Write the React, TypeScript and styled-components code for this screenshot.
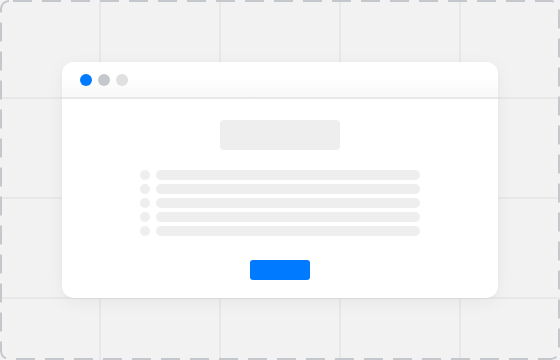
import React from "react";
import styled, { createGlobalStyle } from "styled-components";

const Global = createGlobalStyle`
  html, body { margin: 0; padding: 0; background: #f2f2f2; }
  body { font-family: "Liberation Sans", Arial, sans-serif; }
`;

const Frame = styled.div`
  position: relative;
  width: 560px;
  height: 360px;
  box-sizing: border-box;
  border-radius: 8px;
  overflow: hidden;
  background-color: #f2f2f2;
  background-image:
    linear-gradient(to right, #e8e8e8 0, #e8e8e8 2px, transparent 2px),
    linear-gradient(to bottom, #e8e8e8 0, #e8e8e8 2px, transparent 2px);
  background-size: 120px 100px, 120px 100px;
  background-position: 99px 0, 0 97px;
  display: flex;
  align-items: center;
  justify-content: center;
`;

const DashedEdge = styled.svg`
  position: absolute;
  inset: 0;
  pointer-events: none;
`;

const Window = styled.div`
  width: 436px;
  height: 236px;
  background: #ffffff;
  border-radius: 12px;
  box-shadow: 0 4px 18px rgba(0, 0, 0, 0.05), 0 1px 3px rgba(0, 0, 0, 0.03);
  overflow: hidden;
  display: flex;
  flex-direction: column;
  position: relative;
  z-index: 1;
`;

const TitleBar = styled.div`
  height: 35px;
  flex: none;
  display: flex;
  align-items: center;
  gap: 6px;
  padding: 0 0 0 18px;
  background: linear-gradient(to bottom, #ffffff 40%, #f8f8f8 100%);
  border-bottom: 2px solid #e8e8e8;
`;

const Dot = styled.span<{ $color: string }>`
  width: 12px;
  height: 12px;
  border-radius: 50%;
  background: ${(p) => p.$color};
`;

const Body = styled.div`
  flex: 1;
  display: flex;
  flex-direction: column;
  align-items: center;
  padding-top: 21px;
`;

const Heading = styled.div`
  width: 120px;
  height: 30px;
  border-radius: 4px;
  background: #eeeeee;
`;

const List = styled.div`
  margin-top: 20px;
  width: 280px;
  display: flex;
  flex-direction: column;
  gap: 4px;
`;

const Row = styled.div`
  display: flex;
  align-items: center;
  gap: 6px;
`;

const Bullet = styled.span`
  width: 10px;
  height: 10px;
  border-radius: 50%;
  background: #eeeeee;
  flex: none;
`;

const Line = styled.span`
  flex: 1;
  height: 10px;
  border-radius: 5px;
  background: #eeeeee;
`;

const Button = styled.div`
  margin-top: 24px;
  width: 60px;
  height: 20px;
  border-radius: 3px;
  background: #007aff;
`;

export default function App() {
  return (
    <>
      <Global />
      <Frame>
        <Window>
          <TitleBar>
            <Dot $color="#007aff" />
            <Dot $color="#c4c7cb" />
            <Dot $color="#e0e0e0" />
          </TitleBar>
          <Body>
            <Heading />
            <List>
              {[0, 1, 2, 3, 4].map((i) => (
                <Row key={i}>
                  <Bullet />
                  <Line />
                </Row>
              ))}
            </List>
            <Button />
          </Body>
        </Window>
        <DashedEdge width="560" height="360" viewBox="0 0 560 360">
          <rect
            x="1"
            y="1"
            width="558"
            height="358"
            rx="8"
            ry="8"
            fill="none"
            stroke="#c4c7cc"
            strokeWidth="2"
            strokeDasharray="19 10"
            strokeDashoffset="-4"
          />
        </DashedEdge>
      </Frame>
    </>
  );
}
